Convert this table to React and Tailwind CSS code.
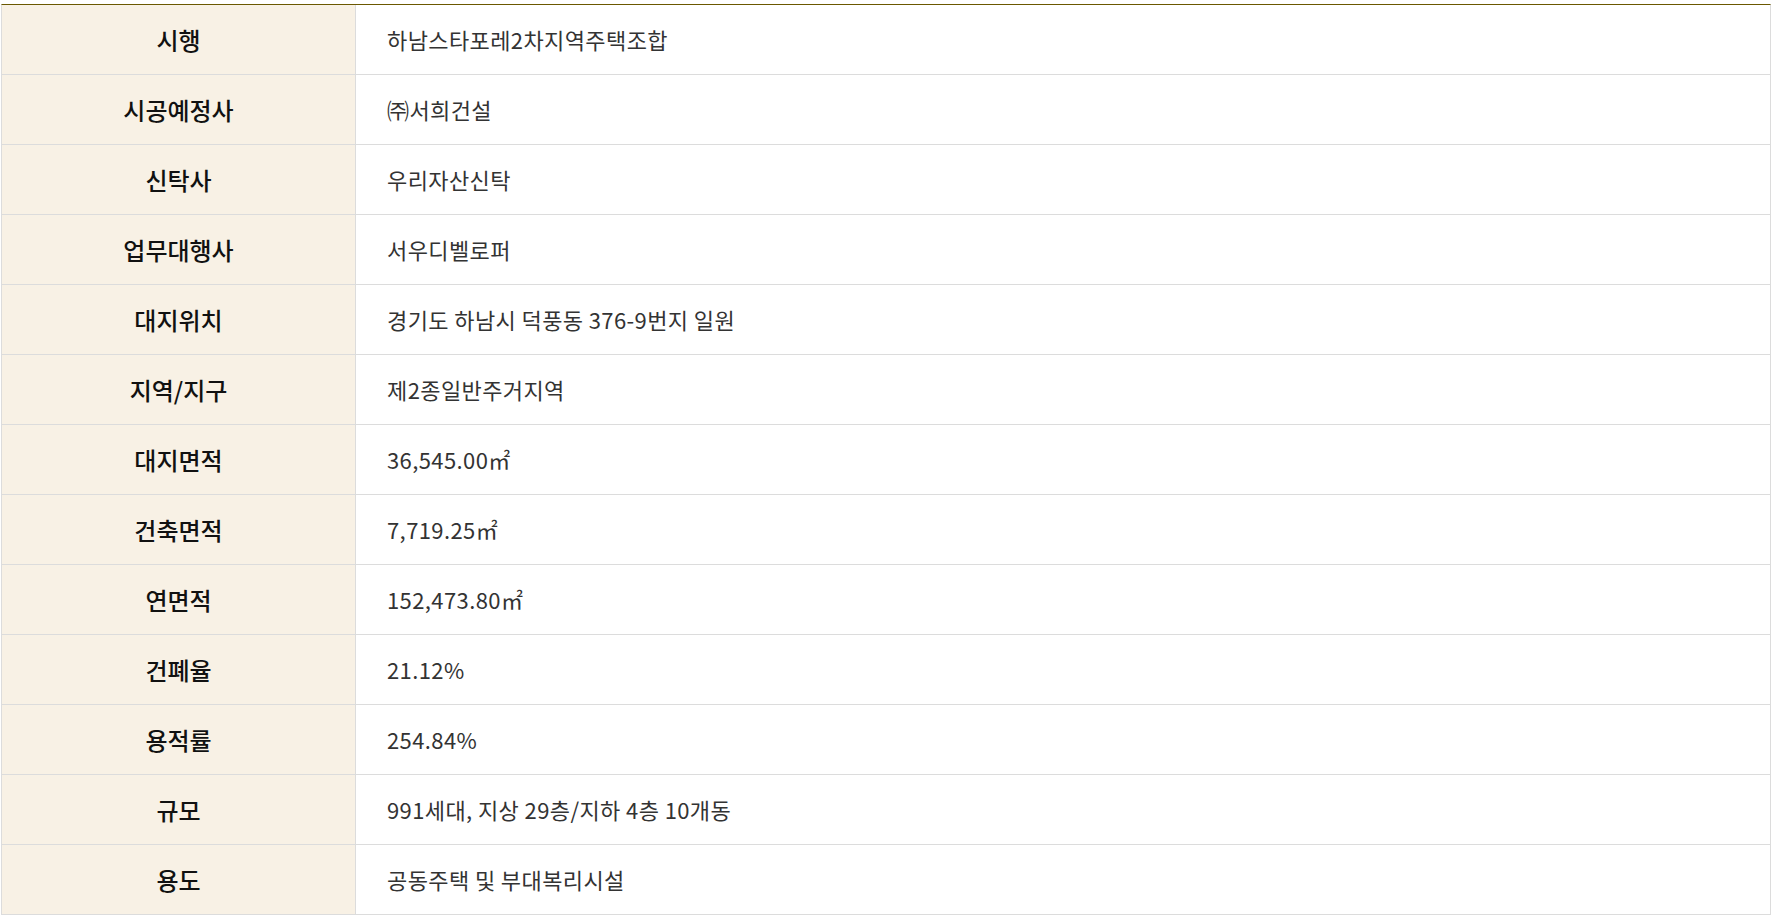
import React from "react";

const rows = [
  ["시행", "하남스타포레2차지역주택조합"],
  ["시공예정사", "㈜서희건설"],
  ["신탁사", "우리자산신탁"],
  ["업무대행사", "서우디벨로퍼"],
  ["대지위치", "경기도 하남시 덕풍동 376-9번지 일원"],
  ["지역/지구", "제2종일반주거지역"],
  ["대지면적", "36,545.00㎡"],
  ["건축면적", "7,719.25㎡"],
  ["연면적", "152,473.80㎡"],
  ["건폐율", "21.12%"],
  ["용적률", "254.84%"],
  ["규모", "991세대, 지상 29층/지하 4층 10개동"],
  ["용도", "공동주택 및 부대복리시설"],
];

export default function App() {
  return (
    <div
      className="bg-white w-[1776px] h-[917px] pt-[4px] pl-[1px]"
      style={{ fontFamily: '"Noto Sans CJK KR", "Noto Sans", sans-serif' }}
    >
      <div className="w-[1770px] border-t border-t-[#6b5800] border-l border-r border-[#dcdcdc]">
        {rows.map(([h, v]) => (
          <div key={h} className="grid grid-cols-[354px_1fr] h-[70px] border-b border-[#dcdcdc]">
            <div className="bg-[#f8f1e5] border-r border-[#dcdcdc] flex items-center justify-center text-[24px] font-medium text-[#111]">
              {h}
            </div>
            <div className="flex items-center pl-[31px] text-[22px] tracking-[0.4px] text-[#333]">
              {v}
            </div>
          </div>
        ))}
      </div>
    </div>
  );
}
